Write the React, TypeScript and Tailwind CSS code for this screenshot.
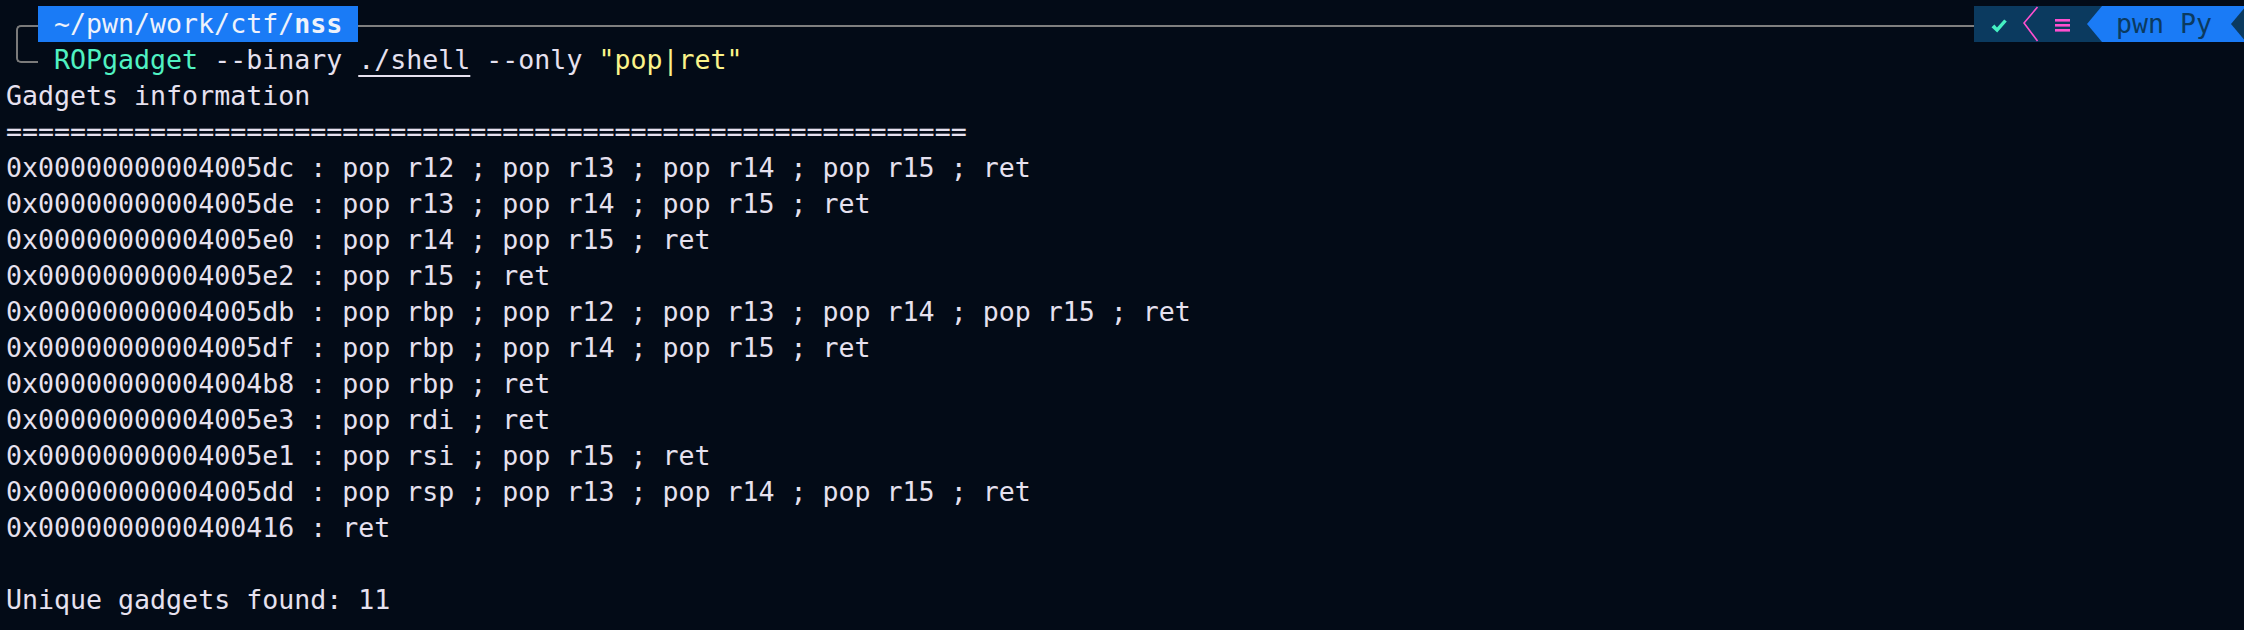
import React from 'react';

const gadgets = [
  '0x00000000004005dc : pop r12 ; pop r13 ; pop r14 ; pop r15 ; ret',
  '0x00000000004005de : pop r13 ; pop r14 ; pop r15 ; ret',
  '0x00000000004005e0 : pop r14 ; pop r15 ; ret',
  '0x00000000004005e2 : pop r15 ; ret',
  '0x00000000004005db : pop rbp ; pop r12 ; pop r13 ; pop r14 ; pop r15 ; ret',
  '0x00000000004005df : pop rbp ; pop r14 ; pop r15 ; ret',
  '0x00000000004004b8 : pop rbp ; ret',
  '0x00000000004005e3 : pop rdi ; ret',
  '0x00000000004005e1 : pop rsi ; pop r15 ; ret',
  '0x00000000004005dd : pop rsp ; pop r13 ; pop r14 ; pop r15 ; ret',
  '0x0000000000400416 : ret',
];

const RightPrompt: React.FC = () => (
  <div className="flex h-[36px] shrink-0">
    <div className="flex h-full w-[113px] items-center bg-[#0b3a5f]">
      <svg width="16" height="14" viewBox="0 0 16 14" className="ml-[17px] mt-[4px]">
        <path d="M0.5 8.2 L3.4 5.6 L6 8.6 L13.2 0.4 L15.8 2.4 L6.2 13.4 Z" fill="#45f0c2" />
      </svg>
      <svg width="16" height="36" viewBox="0 0 16 36" className="ml-[16px]">
        <polyline points="14.5,1 1,17 14.5,35" fill="none" stroke="#ff4fcf" strokeWidth="1.6" />
      </svg>
      <svg width="15" height="36" viewBox="0 0 15 36" className="ml-[16px]">
        <rect x="0" y="13" width="15" height="2.6" fill="#ff4fcf" />
        <rect x="0" y="18" width="15" height="2.6" fill="#ff4fcf" />
        <rect x="0" y="23" width="15" height="2.6" fill="#ff4fcf" />
      </svg>
    </div>
    <svg width="15" height="36" viewBox="0 0 15 36" className="bg-[#0b3a5f]">
      <polygon points="0,18 15,0 15,36" fill="#1a7bf6" />
    </svg>
    <div className="h-full w-[129px] whitespace-pre bg-[#1a7bf6] pl-[14px] text-[#0b3a5f]">pwn Py</div>
    <svg width="13" height="36" viewBox="0 0 13 36" className="bg-[#1a7bf6]">
      <polygon points="0,18 15,0 15,36" fill="#0b3a5f" />
    </svg>
  </div>
);

export default function App() {
  return (
    <div className="h-[630px] w-[2244px] overflow-hidden bg-[#030b17] pl-[6px] pt-[6px] font-['DejaVu_Sans_Mono',monospace] text-[26.6px] leading-[36px] text-[#e6e1ef]">
      <div className="flex">
        <div className="w-[32px] shrink-0">
          <div className="ml-[10px] mt-[19px] h-[38px] w-[22px] rounded-l-[5px] border-y-2 border-l-2 border-[#7a7a7a]" />
        </div>
        <div className="flex min-w-0 flex-1 flex-col">
          <div className="flex h-[36px] items-center">
            <div className="h-full shrink-0 whitespace-pre bg-[#1a7bf6] text-[#eef2fb]">
              {' ~/pwn/work/ctf/'}
              <span className="font-bold">nss</span>
              {' '}
            </div>
            <div className="mt-[3px] h-[2px] flex-1 bg-[#7f7f7f]" />
            <RightPrompt />
          </div>
          <div className="h-[36px] whitespace-pre">
            {' '}
            <span className="text-[#50f2c2]">ROPgadget</span>
            {' --binary '}
            <span className="underline decoration-[1.5px] underline-offset-[6px]">./shell</span>
            {' --only '}
            <span className="text-[#fbf38a]">"pop|ret"</span>
          </div>
        </div>
      </div>
      <div className="whitespace-pre">Gadgets information</div>
      <div className="whitespace-pre">{'='.repeat(60)}</div>
      {gadgets.map((g) => (
        <div key={g} className="whitespace-pre">
          {g}
        </div>
      ))}
      <div className="h-[36px]" />
      <div className="whitespace-pre">Unique gadgets found: 11</div>
    </div>
  );
}
